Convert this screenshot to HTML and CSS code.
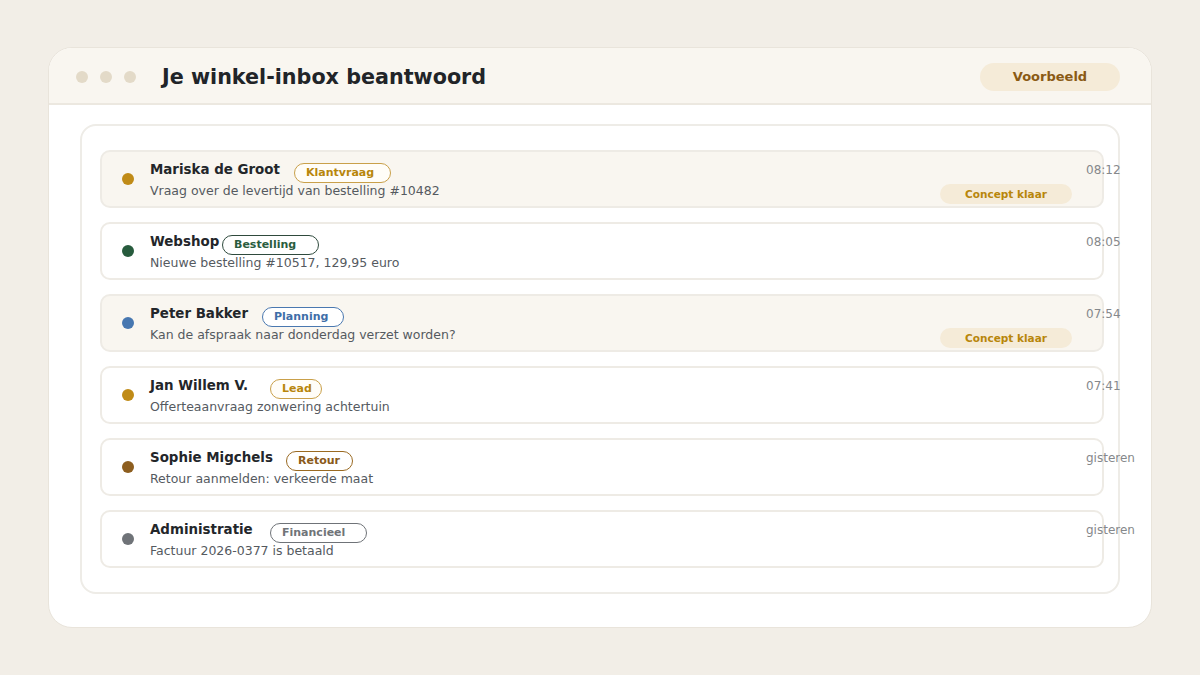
FILE: index.html
```html
<!DOCTYPE html>
<html lang="nl">
<head>
<meta charset="utf-8">
<title>Je winkel-inbox beantwoord</title>
<link rel="stylesheet" href="styles.css">
</head>
<body>
<div class="window">
  <header class="titlebar">
    <div class="dots"><span class="dot"></span><span class="dot"></span><span class="dot"></span></div>
    <h1 class="title">Je winkel-inbox beantwoord</h1>
    <span class="pill-sample">Voorbeeld</span>
  </header>
  <main class="content">
    <section class="inbox">
      <div class="row row--draft">
        <span class="status status--gold"></span>
        <div class="main">
          <div class="head">
            <span class="name" style="width:144px">Mariska de Groot</span>
            <span class="tag tag--gold" style="width:97px">Klantvraag</span>
          </div>
          <div class="subject">Vraag over de levertijd van bestelling #10482</div>
        </div>
        <div class="side"><span class="draft">Concept klaar</span></div>
        <div class="time">08:12</div>
      </div>
      <div class="row">
        <span class="status status--green"></span>
        <div class="main">
          <div class="head">
            <span class="name" style="width:72px">Webshop</span>
            <span class="tag tag--green" style="width:97px">Bestelling</span>
          </div>
          <div class="subject">Nieuwe bestelling #10517, 129,95 euro</div>
        </div>
        <div class="side"></div>
        <div class="time">08:05</div>
      </div>
      <div class="row row--draft">
        <span class="status status--blue"></span>
        <div class="main">
          <div class="head">
            <span class="name" style="width:112px">Peter Bakker</span>
            <span class="tag tag--blue" style="width:82px">Planning</span>
          </div>
          <div class="subject">Kan de afspraak naar donderdag verzet worden?</div>
        </div>
        <div class="side"><span class="draft">Concept klaar</span></div>
        <div class="time">07:54</div>
      </div>
      <div class="row">
        <span class="status status--gold"></span>
        <div class="main">
          <div class="head">
            <span class="name" style="width:120px">Jan Willem V.</span>
            <span class="tag tag--gold" style="width:52px">Lead</span>
          </div>
          <div class="subject">Offerteaanvraag zonwering achtertuin</div>
        </div>
        <div class="side"></div>
        <div class="time">07:41</div>
      </div>
      <div class="row">
        <span class="status status--brown"></span>
        <div class="main">
          <div class="head">
            <span class="name" style="width:136px">Sophie Migchels</span>
            <span class="tag tag--brown" style="width:67px">Retour</span>
          </div>
          <div class="subject">Retour aanmelden: verkeerde maat</div>
        </div>
        <div class="side"></div>
        <div class="time">gisteren</div>
      </div>
      <div class="row">
        <span class="status status--grey"></span>
        <div class="main">
          <div class="head">
            <span class="name" style="width:120px">Administratie</span>
            <span class="tag tag--grey" style="width:97px">Financieel</span>
          </div>
          <div class="subject">Factuur 2026-0377 is betaald</div>
        </div>
        <div class="side"></div>
        <div class="time">gisteren</div>
      </div>
    </section>
  </main>
</div>
</body>
</html>
```
FILE: styles.css
```css
* { box-sizing: border-box; }
html, body { margin: 0; }
body {
  background: #f2eee7;
  padding: 47px 48px 48px;
  font-family: "DejaVu Sans", "Noto Sans", sans-serif;
  color: #23262a;
}
.window {
  width: 1104px;
  height: 581px;
  background: #ffffff;
  border: 1px solid #e9e4db;
  border-radius: 24px;
  overflow: hidden;
  display: flex;
  flex-direction: column;
}
.titlebar {
  height: 57px;
  flex: none;
  background: #f9f6f0;
  border-bottom: 2px solid #ece8e0;
  display: flex;
  align-items: center;
  padding: 2px 31px 0 27px;
}
.dots { display: flex; gap: 12px; }
.dot {
  width: 12px; height: 12px; border-radius: 50%;
  background: #e3dac8;
}
.title {
  margin: 0 0 0 26px;
  font-size: 20.7px;
  font-weight: bold;
  color: #212428;
  flex: 1;
  line-height: 24px;
}
.pill-sample {
  width: 140px; height: 28px;
  border-radius: 14px;
  background: #f5ebd8;
  color: #8a5a14;
  font-size: 13px;
  font-weight: bold;
  display: flex; align-items: center; justify-content: center;
}
.content {
  flex: 1;
  padding: 19px 31px 32px;
}
.inbox {
  height: 470px;
  border: 2px solid #eeece7;
  border-radius: 16px;
  padding: 24px 14px 24px 18px;
  display: flex;
  flex-direction: column;
  gap: 14px;
}
.row {
  height: 58px;
  border: 2px solid #eeebe5;
  border-radius: 10px;
  background: #ffffff;
  display: flex;
  align-items: stretch;
  padding-left: 20px;
}
.row--draft { background: #f9f6f0; }
.status {
  width: 12px; height: 12px; border-radius: 50%;
  align-self: center;
  margin-right: 16px;
  flex: none;
}
.status--gold { background: #c08b17; }
.status--green { background: #275b3d; }
.status--blue { background: #4777b0; }
.status--brown { background: #8d5e1f; }
.status--grey { background: #6f7378; }
.main {
  flex: 1;
  padding-top: 10px;
  min-width: 0;
}
.head { display: flex; align-items: flex-start; height: 20px; padding-top: 1px; }
.name {
  font-size: 13.4px;
  font-weight: bold;
  line-height: 16px;
  margin-top: -1px;
  white-space: nowrap;
  flex: none;
  color: #23262a;
}
.tag {
  height: 20px;
  border-radius: 10px;
  border: 1px solid;
  font-size: 11px;
  font-weight: bold;
  line-height: 18px;
  padding-left: 11px;
  white-space: nowrap;
  flex: none;
}
.tag--gold { color: #b8860b; border-color: #c9a04a; background: #fffdf8; }
.tag--green { color: #2a5c3e; border-color: #2f4a3d; background: #ffffff; }
.tag--blue { color: #3e6ea8; border-color: #4a78b0; background: #ffffff; }
.tag--brown { color: #8a5a1a; border-color: #9a6a22; background: #ffffff; }
.tag--grey { color: #707478; border-color: #6f7378; background: #ffffff; }
.subject {
  font-size: 12.5px;
  line-height: 16px;
  margin-top: 1px;
  color: #555a5f;
  white-space: nowrap;
}
.side {
  width: 132px;
  flex: none;
  display: flex;
  align-items: flex-end;
  padding-bottom: 2px;
}
.draft {
  width: 132px; height: 20px;
  border-radius: 10px;
  background: #f5ebd8;
  color: #b8860b;
  font-size: 10.5px;
  font-weight: bold;
  display: flex; align-items: center; justify-content: center;
}
.time {
  width: 16px;
  flex: none;
  margin-left: 14px;
  padding-top: 10px;
  font-size: 12px;
  line-height: 16px;
  color: #85888b;
  white-space: nowrap;
  overflow: visible;
}
```
